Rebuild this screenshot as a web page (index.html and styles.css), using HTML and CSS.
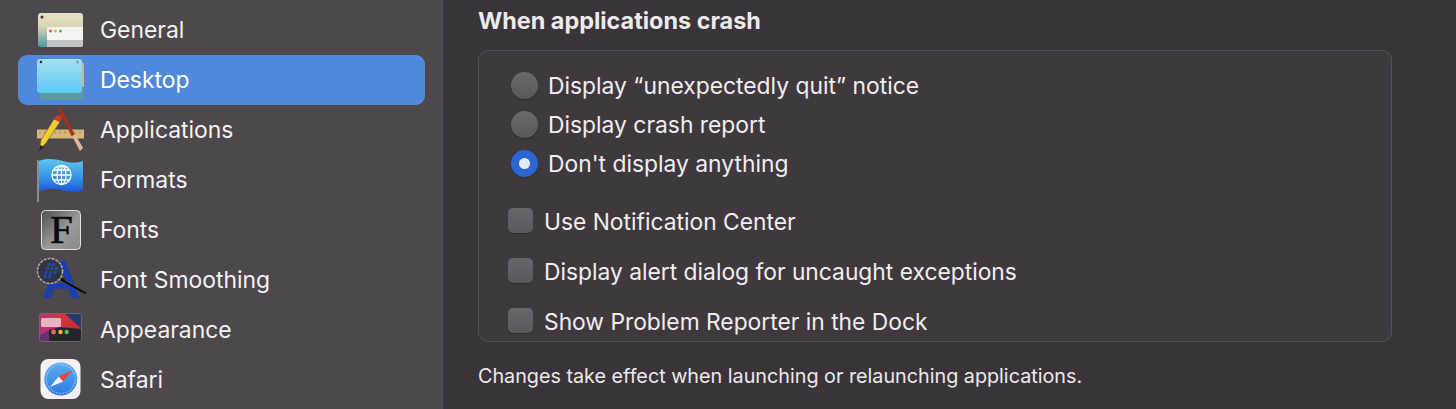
FILE: index.html
```html
<!DOCTYPE html>
<html lang="en">
<head>
  <meta charset="UTF-8">
  <meta name="viewport" content="width=device-width, initial-scale=1.0">
  <title>Preferences</title>
  <link rel="stylesheet" href="styles.css">
</head>
<body>
  <div class="sidebar">
    <div class="row">
      <svg class="icon" viewBox="36 5 50 50">
        <defs>
          <linearGradient id="genBg" x1="0" y1="0" x2="0" y2="1">
            <stop offset="0" stop-color="#e9e3c6"/><stop offset="0.4" stop-color="#d8d5b2"/><stop offset="0.7" stop-color="#93b5a6"/><stop offset="1" stop-color="#4f9aa6"/>
          </linearGradient>
        </defs>
        <rect x="38" y="13" width="45" height="34" rx="3" fill="url(#genBg)"/>
        <circle cx="42" cy="17" r="1.5" fill="#333"/>
        <path d="M47 29a2 2 0 0 1 2-2h34v17a3 3 0 0 1-3 3H47z" fill="#f4f4f4"/>
        <path d="M47 40h36v4a3 3 0 0 1-3 3H47z" fill="#c4c4c4"/>
        <circle cx="50.500" cy="31" r="1.600" fill="#ee5a4f"/>
        <circle cx="55.500" cy="31" r="1.600" fill="#f2b33c"/>
        <circle cx="60.500" cy="31" r="1.600" fill="#50c04c"/>
      </svg>
      <span>General</span>
    </div>
    <div class="row selected">
      <svg class="icon" viewBox="36 55 50 50">
        <defs>
          <linearGradient id="deskBg" x1="0" y1="0" x2="0" y2="1">
            <stop offset="0" stop-color="#a6dff0"/><stop offset="1" stop-color="#5cc9f5"/>
          </linearGradient>
        </defs>
        <rect x="40" y="66" width="44" height="34" rx="3" fill="#5c9a9f"/>
        <path d="M78 62h3a3 3 0 0 1 3 3v22h-4z" fill="#c9b98a"/>
        <rect x="37" y="59" width="45" height="34" rx="3" fill="url(#deskBg)"/>
        <circle cx="41" cy="62" r="1.300" fill="#223"/>
        <circle cx="77.500" cy="62" r="1.500" fill="#7aa4b4"/>
      </svg>
      <span>Desktop</span>
    </div>
    <div class="row">
      <svg class="icon" viewBox="36 105 50 50">
        <rect x="37" y="129" width="47" height="10" fill="#d8b77c"/>
        <path d="M37 129h47M37 139h47" stroke="#4a4540" stroke-width="1"/>
        <path d="M40 134v-3M45 134v-3M50 134v-3M55 134v-3M60 134v-3M65 134v-3M70 134v-3M75 134v-3M80 134v-3" stroke="#9a7c4c" stroke-width="0.800"/>
        <path d="M58 108l3 0 14 27-3 2z" fill="#a8301c"/>
        <path d="M72 136l3-2 8 14-3 3z" fill="#e4b494"/>
        <path d="M39 150l2-10 13-21 6 3-14 21z" fill="#f2cc30" stroke="#5a4a20" stroke-width="0.500"/>
        <path d="M39 151l1-6 4 2z" fill="#222"/>
        <path d="M54 119l2-3 4-1 2 3-2 4z" fill="#d8342c"/>
      </svg>
      <span>Applications</span>
    </div>
    <div class="row">
      <svg class="icon" viewBox="36 155 50 50">
        <defs>
          <linearGradient id="flagBg" x1="0" y1="0" x2="0" y2="1">
            <stop offset="0" stop-color="#5cc6ee"/><stop offset="0.55" stop-color="#3a94e4"/><stop offset="1" stop-color="#1a58d8"/>
          </linearGradient>
        </defs>
        <rect x="37" y="160" width="2" height="42" fill="#8d8d8f"/>
        <path d="M39 161c8-3 16-2 24 0s14 2 20 0v29c-8 3-14 2-22 0s-15-2-22 2z" fill="url(#flagBg)"/>
        <g fill="none" stroke="#fff" stroke-width="1.300">
          <circle cx="61.500" cy="175" r="9.500"/>
          <ellipse cx="61.500" cy="175" rx="4.500" ry="9.500"/>
          <path d="M61.500 165.500v19M52 175h19M53.500 170h16M53.500 180h16"/>
        </g>
      </svg>
      <span>Formats</span>
    </div>
    <div class="row">
      <svg class="icon" viewBox="36 205 50 50">
        <defs>
          <linearGradient id="fontBg" x1="0" y1="0" x2="1" y2="1">
            <stop offset="0" stop-color="#4d4d4d"/><stop offset="0.55" stop-color="#9a9a9a"/><stop offset="1" stop-color="#8a8a8a"/>
          </linearGradient>
        </defs>
        <rect x="41.500" y="210.500" width="39" height="39" rx="4" fill="url(#fontBg)" stroke="#e2e2e2"/>
        <text class="icon-letter" x="61.500" y="243" text-anchor="middle" font-size="41">F</text>
      </svg>
      <span>Fonts</span>
    </div>
    <div class="row">
      <svg class="icon icon-free" viewBox="36 255 50 50">
        <text class="icon-letter-blue" x="61" y="298" text-anchor="middle" font-size="54">A</text>
        <circle cx="50" cy="271" r="12.500" fill="#34343c" stroke="#a8a8a8" stroke-width="1.600" stroke-dasharray="3 1"/>
        <g fill="#1f47c4">
          <path d="M48 263h3l-1 3h-3zM52.500 263h3l-1 3h-3zM46.500 267h3l-1 3h-3zM51 267h3l-1 3h-3zM55.500 267h3l-1 3h-3zM45 271h3l-1 3h-3zM49.500 271h3l-1 3h-3zM54 271h3l-1 3h-3zM44 275h3l-1 3h-3zM48.500 275h3l-1 3h-3z"/>
        </g>
        <path d="M61 279l25 14" stroke="#0a0a0a" stroke-width="3"/>
        <path d="M65 280l21 12" stroke="#8a8a8a" stroke-width="0.600"/>
      </svg>
      <span>Font Smoothing</span>
    </div>
    <div class="row">
      <svg class="icon" viewBox="36 305 50 50">
        <defs>
          <linearGradient id="appBg" x1="0" y1="0" x2="1" y2="0">
            <stop offset="0" stop-color="#a8347e"/><stop offset="0.5" stop-color="#d8343c"/><stop offset="1" stop-color="#c02c34"/>
          </linearGradient>
          <clipPath id="appClip"><rect x="39" y="313" width="43" height="29" rx="3"/></clipPath>
        </defs>
        <g clip-path="url(#appClip)">
          <rect x="39" y="313" width="43" height="29" fill="url(#appBg)"/>
          <path d="M64 313h18v16z" fill="#243a70"/>
          <path d="M39 336l10-6v12h-10z" fill="#6a2f78"/>
          <path d="M49 330l11-3 22 2v13h-33z" fill="#26242a"/>
          <rect x="41" y="318" width="20" height="9" rx="1.500" fill="#e8b4c0"/>
        </g>
        <rect x="39.500" y="313.500" width="42" height="28" rx="3" fill="none" stroke="#6a6a6a"/>
        <circle cx="53.500" cy="332" r="2.400" fill="#ee6a5c"/>
        <circle cx="60.500" cy="332" r="2.200" fill="#f2b63c"/>
        <circle cx="66.700" cy="332" r="2.200" fill="#50c04c"/>
      </svg>
      <span>Appearance</span>
    </div>
    <div class="row">
      <svg class="icon" viewBox="36 355 50 50">
        <defs>
          <linearGradient id="safBg" x1="0" y1="0" x2="0" y2="1">
            <stop offset="0" stop-color="#5cb0f0"/><stop offset="1" stop-color="#2a78e4"/>
          </linearGradient>
        </defs>
        <rect x="40.500" y="359" width="40" height="40" rx="8" fill="#f2f2f4"/>
        <circle cx="60.800" cy="379" r="16.500" fill="url(#safBg)"/>
        <circle cx="60.800" cy="379" r="14.500" fill="none" stroke="#bcdcf8" stroke-width="1.500" stroke-dasharray="0.700 1.500"/>
        <path d="M72.700 370l-14 6.500 4.500 5z" fill="#e8443c"/>
        <path d="M50 387l13.200-5.500-4.500-5z" fill="#f4f4f4"/>
      </svg>
      <span>Safari</span>
    </div>
  </div>

  <div class="main">
    <h2 class="heading">When applications crash</h2>
    <div class="box">
      <div class="radios">
        <div class="option"><span class="radio"></span>Display “unexpectedly quit” notice</div>
        <div class="option"><span class="radio"></span>Display crash report</div>
        <div class="option"><span class="radio on"></span>Don't display anything</div>
      </div>
      <div class="checks">
        <div class="check"><span class="checkbox"></span>Use Notification Center</div>
        <div class="check"><span class="checkbox"></span>Display alert dialog for uncaught exceptions</div>
        <div class="check"><span class="checkbox"></span>Show Problem Reporter in the Dock</div>
      </div>
    </div>
    <p class="note">Changes take effect when launching or relaunching applications.</p>
  </div>
</body>
</html>
```

FILE: styles.css
```css
html, body {
  margin: 0;
  height: 409px;
  overflow: hidden;
}
body {
  display: flex;
  font-family: Inter, "Liberation Sans", sans-serif;
  background: #3a343a;
  color: #f0eef0;
}
.sidebar {
  width: 443px;
  height: 409px;
  box-sizing: border-box;
  padding: 5px 17px 0 18px;
  background: #4c484b;
  border-right: 1px solid #57535a;
  flex-shrink: 0;
}
.row {
  display: flex;
  align-items: center;
  height: 50px;
  gap: 14px;
  padding-left: 18px;
  border-radius: 9px;
  font-size: 22.9px;
  color: #f4f2f4;
}
.row.selected {
  background: #5088dc;
  color: #fff;
}
.icon {
  width: 50px;
  height: 50px;
  flex-shrink: 0;
}
.icon-free {
  overflow: visible;
}
.icon-letter {
  font-family: "Liberation Serif", serif;
  fill: #0c0c0c;
  stroke: #0c0c0c;
  stroke-width: 0.7;
}
.icon-letter-blue {
  font-family: "Liberation Sans", sans-serif;
  font-weight: bold;
  fill: #1c3fae;
}
.main {
  flex: 1;
  padding: 7px 64px 0 35px;
}
.heading {
  margin: 0 0 15px;
  font-size: 23.4px;
  line-height: 28px;
  font-weight: 700;
  color: #ecebec;
}
.box {
  box-sizing: border-box;
  height: 292px;
  padding: 15px 0 0 32px;
  background: #3f393e;
  border: 1px solid #565158;
  border-radius: 10px;
}
.option {
  display: flex;
  align-items: center;
  gap: 10px;
  height: 39px;
  font-size: 22.85px;
}
.radio {
  width: 27px;
  height: 27px;
  border-radius: 50%;
  background: linear-gradient(#6d686c, #5c575b);
  box-shadow: 0 1px 1px rgba(0,0,0,0.3);
  flex-shrink: 0;
}
.radio.on {
  background: #2b66d2;
  display: flex;
  align-items: center;
  justify-content: center;
}
.radio.on::after {
  content: "";
  width: 11px;
  height: 11px;
  border-radius: 50%;
  background: #e2eafa;
}
.checks {
  display: flex;
  flex-direction: column;
  gap: 24px;
  margin: 25px 0 0 -3px;
}
.check {
  display: flex;
  align-items: flex-start;
  gap: 11px;
  height: 26px;
  line-height: 28px;
  font-size: 22.8px;
}
.checkbox {
  width: 25px;
  height: 25px;
  border-radius: 5px;
  background: linear-gradient(#6a656a, #5c575b);
  box-shadow: 0 1px 1px rgba(0,0,0,0.3);
  flex-shrink: 0;
}
.note {
  margin: 20px 0 0;
  font-size: 19.75px;
  line-height: 28px;
  color: #eceaec;
}
```
